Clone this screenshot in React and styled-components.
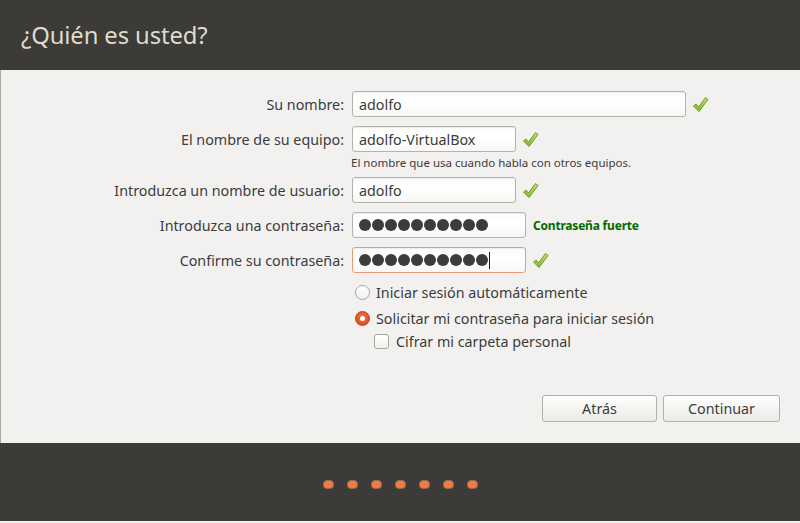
import React from "react";
import styled, { createGlobalStyle } from "styled-components";

const Global = createGlobalStyle`
  html, body { margin: 0; padding: 0; background: #f2f1f0; }
  body { font-family: "Noto Sans", "DejaVu Sans", sans-serif; }
  #root { width: 800px; height: 523px; }
`;

const Window = styled.div`
  width: 800px;
  height: 523px;
  display: flex;
  flex-direction: column;
  background: #f2f1f0;
  overflow: hidden;
`;

const Header = styled.header`
  height: 70px;
  flex: none;
  background: #3c3b37;
  display: flex;
  align-items: center;
  padding-left: 21px;
  padding-bottom: 1px;
  box-sizing: border-box;
`;

const Title = styled.h1`
  margin: 0;
  font-weight: 400;
  font-size: 23.8px;
  color: #dfdbd2;
  letter-spacing: -0.1px;
`;

const Body = styled.main`
  flex: 1;
  display: flex;
  flex-direction: column;
  border-left: 1px solid #a9a8a3;
  padding-top: 21px;
  padding-bottom: 21px;
  box-sizing: border-box;
`;

const Form = styled.div`
  display: flex;
  flex-direction: column;
`;

const Row = styled.div`
  display: flex;
  align-items: center;
  height: 26px;
  margin-top: ${(p) => p.$gap ?? 0}px;
`;

const Label = styled.label`
  width: 343px;
  margin-right: 8px;
  text-align: right;
  font-size: 14.3px;
  color: #3c3c3c;
  white-space: nowrap;
`;

const Field = styled.div`
  width: ${(p) => p.$w}px;
  height: 26px;
  box-sizing: border-box;
  border: 1px solid ${(p) => (p.$focus ? "#eb9a78" : "#b4b2ad")};
  border-radius: 3px;
  background: linear-gradient(#fbfbfb, #ffffff 40%, #f7f7f6);
  box-shadow: inset 0 1px 1px rgba(0, 0, 0, 0.06);
  display: flex;
  align-items: center;
  padding-left: 6px;
  font-size: 14.3px;
  color: #3c3c3c;
`;

const Dot = styled.span`
  width: 12px;
  height: 12px;
  border-radius: 50%;
  background: #3c3c3c;
  margin-right: 1px;
  flex: none;
`;

const Caret = styled.span`
  width: 1px;
  height: 17px;
  background: #1a1a1a;
`;

const Hint = styled.div`
  margin-left: 350px;
  height: 25px;
  line-height: 22px;
  font-size: 11.5px;
  color: #3c3c3c;
`;

const Strength = styled.span`
  margin-left: 7px;
  font-size: 12px;
  font-weight: 700;
  color: #006b00;
  letter-spacing: -0.2px;
`;

const CheckWrap = styled.span`
  margin-left: 6px;
  width: 17px;
  height: 17px;
  display: inline-flex;
`;

const Options = styled.div`
  margin-left: 351px;
  margin-top: 6px;
  display: flex;
  flex-direction: column;
`;

const Option = styled.div`
  display: flex;
  align-items: center;
  height: ${(p) => p.$h}px;
  padding-left: ${(p) => p.$indent}px;
  font-size: 14.3px;
  color: #3c3c3c;
  gap: ${(p) => p.$space}px;
`;

const Radio = styled.span`
  width: 15px;
  height: 15px;
  box-sizing: border-box;
  border-radius: 50%;
  flex: none;
  display: inline-flex;
  align-items: center;
  justify-content: center;
  border: 1px solid ${(p) => (p.$on ? "#b9461a" : "#a8a6a1")};
  background: ${(p) =>
    p.$on
      ? "radial-gradient(circle at 50% 40%, #f07a4a, #dd4814 80%)"
      : "linear-gradient(#ffffff, #f1f0ee)"};
  &::after {
    content: "";
    display: ${(p) => (p.$on ? "block" : "none")};
    width: 5px;
    height: 5px;
    border-radius: 50%;
    background: #ffffff;
  }
`;

const Box = styled.span`
  width: 15px;
  height: 15px;
  box-sizing: border-box;
  border-radius: 3px;
  border: 1px solid #a8a6a1;
  background: linear-gradient(#ffffff, #f1f0ee);
  flex: none;
`;

const Spacer = styled.div`
  flex: 1;
`;

const Buttons = styled.div`
  display: flex;
  justify-content: flex-end;
  gap: 6px;
  padding-right: 20px;
`;

const Button = styled.button`
  width: ${(p) => p.$w}px;
  height: 27px;
  box-sizing: border-box;
  border: 1px solid #b2b0ab;
  border-radius: 3px;
  background: linear-gradient(#ffffff, #f3f2f0 60%, #eceae7);
  font-family: inherit;
  font-size: 14.3px;
  color: #3c3c3c;
  padding: 0;
`;

const Footer = styled.footer`
  height: 78px;
  flex: none;
  background: #3c3b37;
  display: flex;
  align-items: center;
  justify-content: center;
  gap: 13px;
  padding-top: 5px;
  box-sizing: border-box;
  margin-bottom: 2px;
`;

const Step = styled.span`
  width: 11px;
  height: 9px;
  box-sizing: border-box;
  border-radius: 4px;
  background: #f47b3e;
  border: 1px solid #8f6b5a;
`;

const Check = () => (
  <CheckWrap>
    <svg width="17" height="17" viewBox="0 0 17 17">
      <defs>
        <linearGradient id="cg" x1="0" y1="0" x2="0" y2="1">
          <stop offset="0" stopColor="#c2e07a" />
          <stop offset="1" stopColor="#84b52c" />
        </linearGradient>
      </defs>
      <path
        d="M1.5 10 L4 8 L6.5 11 L13.5 1.5 L16 3.5 L7 15.5 Z"
        fill="url(#cg)"
        stroke="#6f9b22"
        strokeWidth="1"
        strokeLinejoin="round"
      />
    </svg>
  </CheckWrap>
);

const Dots = ({ n }) => Array.from({ length: n }, (_, i) => <Dot key={i} />);

export default function App() {
  return (
    <Window>
      <Global />
      <Header>
        <Title>¿Quién es usted?</Title>
      </Header>
      <Body>
        <Form>
          <Row>
            <Label>Su nombre:</Label>
            <Field $w={334}>adolfo</Field>
            <Check />
          </Row>
          <Row $gap={9}>
            <Label>El nombre de su equipo:</Label>
            <Field $w={164}>adolfo-VirtualBox</Field>
            <Check />
          </Row>
          <Hint>El nombre que usa cuando habla con otros equipos.</Hint>
          <Row>
            <Label>Introduzca un nombre de usuario:</Label>
            <Field $w={164}>adolfo</Field>
            <Check />
          </Row>
          <Row $gap={9}>
            <Label>Introduzca una contraseña:</Label>
            <Field $w={174}>
              <Dots n={10} />
            </Field>
            <Strength>Contraseña fuerte</Strength>
          </Row>
          <Row $gap={9}>
            <Label>Confirme su contraseña:</Label>
            <Field $w={174} $focus>
              <Dots n={10} />
              <Caret />
            </Field>
            <Check />
          </Row>
          <Options>
            <Option $h={26} $indent={3} $space={6}>
              <Radio />
              Iniciar sesión automáticamente
            </Option>
            <Option $h={26} $indent={3} $space={6}>
              <Radio $on />
              Solicitar mi contraseña para iniciar sesión
            </Option>
            <Option $h={20} $indent={22} $space={7}>
              <Box />
              Cifrar mi carpeta personal
            </Option>
          </Options>
        </Form>
        <Spacer />
        <Buttons>
          <Button $w={115}>Atrás</Button>
          <Button $w={117}>Continuar</Button>
        </Buttons>
      </Body>
      <Footer>
        {Array.from({ length: 7 }, (_, i) => (
          <Step key={i} />
        ))}
      </Footer>
    </Window>
  );
}
